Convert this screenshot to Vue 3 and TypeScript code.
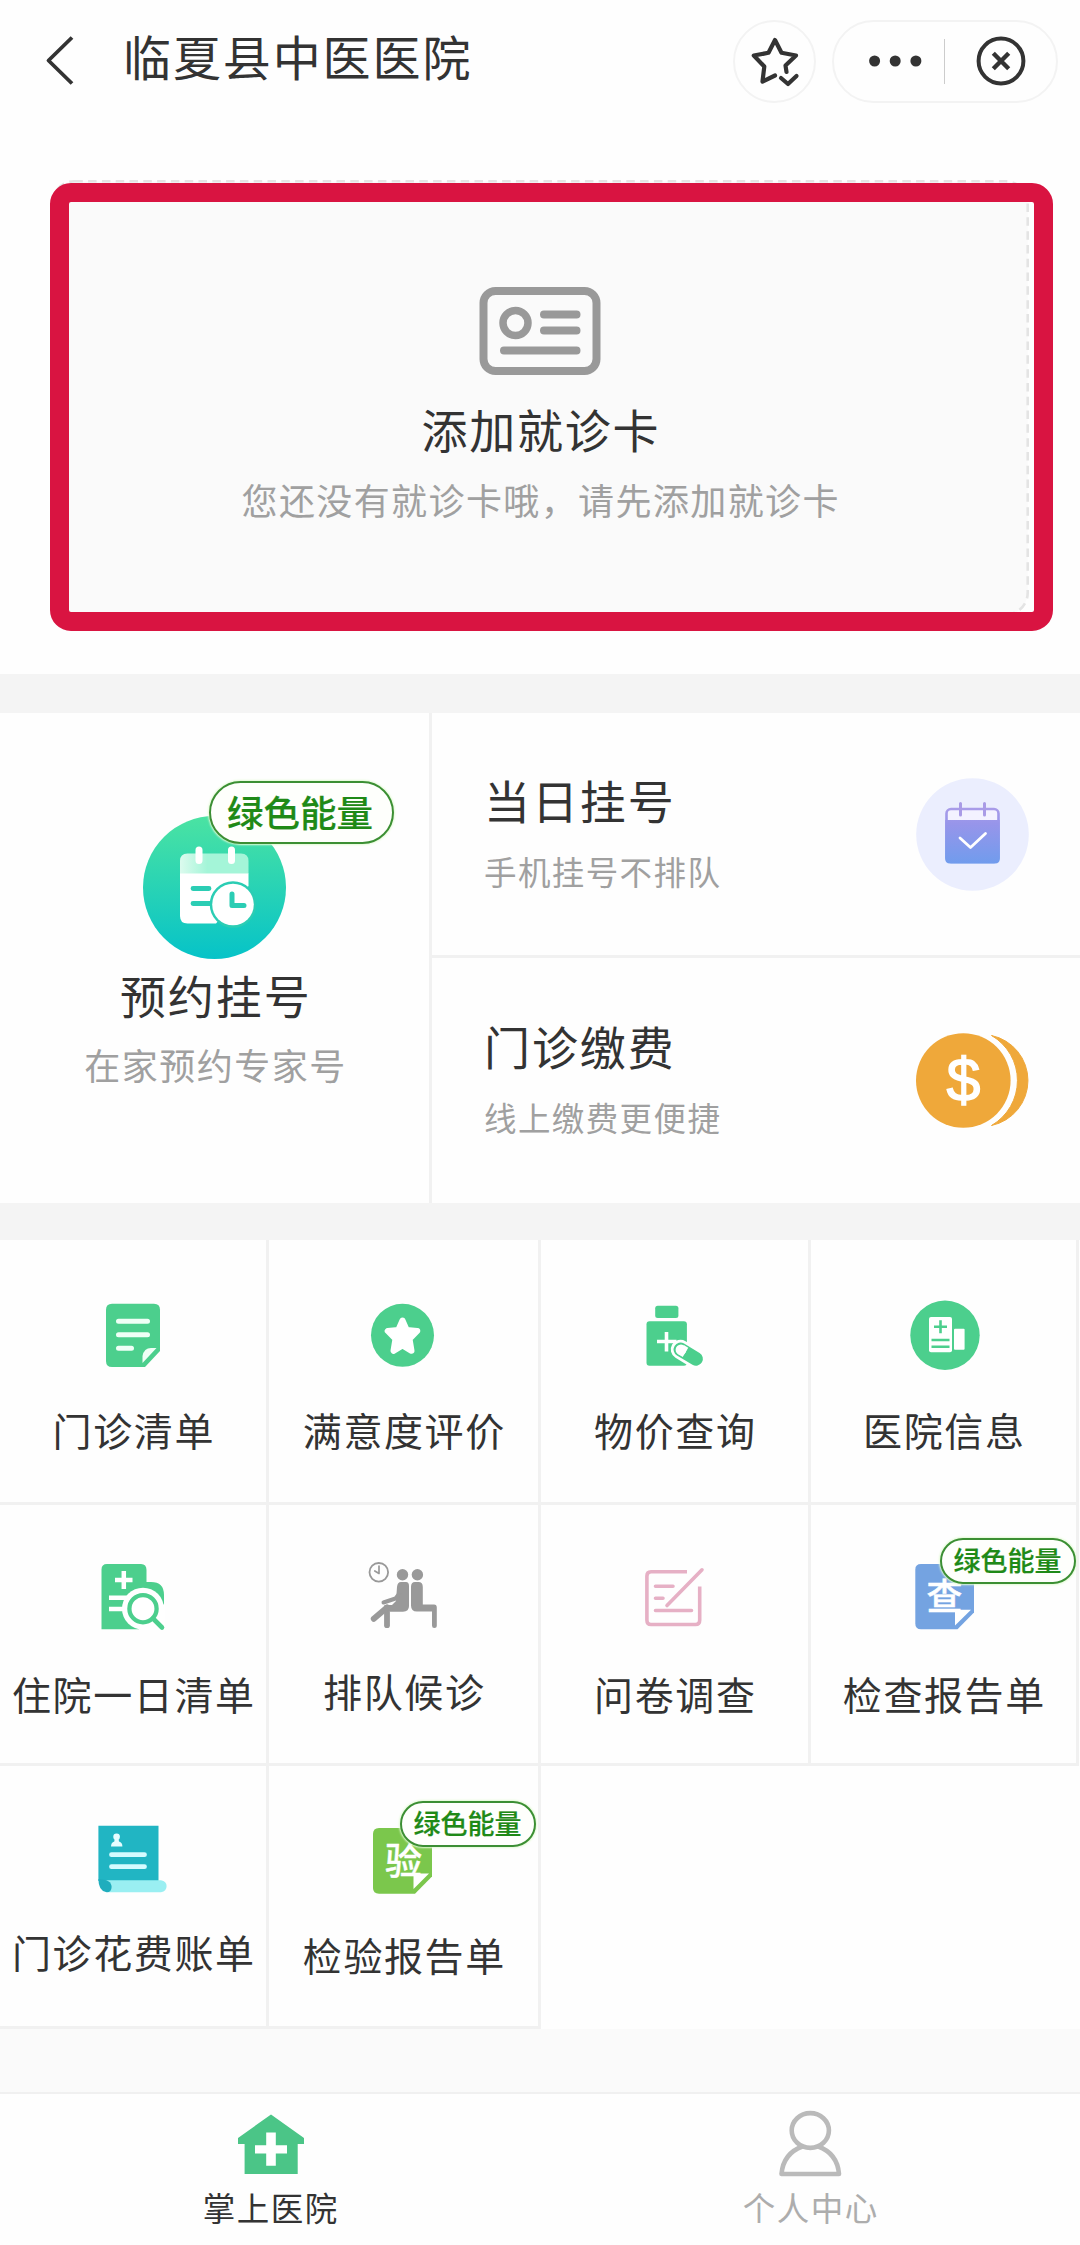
<script setup lang="ts">
type IconName =
  | 'list' | 'rating' | 'price' | 'hospital' | 'daily'
  | 'queue' | 'survey' | 'exam' | 'bill' | 'lab'

interface Service {
  label: string
  icon: IconName
  row: number
  raised?: boolean
  badge?: boolean
}

const services: Service[] = [
  { label: '门诊清单', icon: 'list', row: 1 },
  { label: '满意度评价', icon: 'rating', row: 1 },
  { label: '物价查询', icon: 'price', row: 1 },
  { label: '医院信息', icon: 'hospital', row: 1 },
  { label: '住院一日清单', icon: 'daily', row: 2 },
  { label: '排队候诊', icon: 'queue', row: 2, raised: true },
  { label: '问卷调查', icon: 'survey', row: 2 },
  { label: '检查报告单', icon: 'exam', row: 2, badge: true },
  { label: '门诊花费账单', icon: 'bill', row: 3, raised: true },
  { label: '检验报告单', icon: 'lab', row: 3, badge: true },
]
</script>

<template>
  <div class="page">
    <header class="nav">
      <svg class="back" width="32" height="52" viewBox="0 0 32 52">
        <path d="M28 2.500 L4.500 25.500 L28 48.500" fill="none" stroke="#333" stroke-width="3.800" stroke-linejoin="round" />
      </svg>
      <h1 class="nav-title">临夏县中医医院</h1>
      <div class="round-btn">
        <svg width="54" height="54" viewBox="0 0 54 54" fill="none" stroke="#333" stroke-width="4.200" stroke-linejoin="round" stroke-linecap="round">
          <path d="M27 41.500 L14.500 47.500 L16.300 32.500 L5.800 21.500 L20.500 18.800 L27 6 L33.500 18.800 L48 21.500 L37.500 31.500 L38.500 38" />
          <path d="M33 44 L40 50 L48.500 42" />
        </svg>
      </div>
      <div class="capsule">
        <svg width="54" height="12" viewBox="0 0 54 12" fill="#333">
          <circle cx="5.600" cy="6" r="5.500" /><circle cx="26.200" cy="6" r="5.500" /><circle cx="46.900" cy="6" r="5.500" />
        </svg>
        <i class="capsule-line"></i>
        <svg width="50" height="50" viewBox="0 0 50 50" fill="none" stroke="#333">
          <circle cx="25" cy="25" r="22.400" stroke-width="4" />
          <path d="M17.300 17.300 L32.700 32.700 M32.700 17.300 L17.300 32.700" stroke-width="4.400" />
        </svg>
      </div>
    </header>

    <section class="hero">
      <div class="card">
        <svg class="card-dash" width="978" height="436" viewBox="0 0 978 436">
          <rect x="1.300" y="1.300" width="975.400" height="433.400" rx="22" fill="#fafafa" stroke="#e4e4e4" stroke-width="2.600" stroke-dasharray="8.500 5.300" />
        </svg>
        <svg class="card-icon" width="122" height="88" viewBox="0 0 122 88" fill="none" stroke="#999" stroke-width="8" stroke-linecap="round">
          <rect x="4.500" y="4" width="113" height="80" rx="12" />
          <circle cx="36.500" cy="36" r="12.500" stroke-width="7.500" />
          <path d="M65 27.500 H97.500 M65 43.500 H97.500 M25 63.500 H97.500" />
        </svg>
        <div class="card-title">添加就诊卡</div>
        <div class="card-sub">您还没有就诊卡哦，请先添加就诊卡</div>
        <div class="highlight"></div>
      </div>
    </section>

    <section class="features">
      <div class="feature-main">
        <div class="feature-icon">
          <svg width="143" height="143" viewBox="0 0 143 143">
            <defs>
              <linearGradient id="teal" x1="0" y1="0" x2="0" y2="1">
                <stop offset="0" stop-color="#4be3a2" /><stop offset="1" stop-color="#06c3c8" />
              </linearGradient>
              <linearGradient id="mint" x1="0" y1="0" x2="1" y2="0">
                <stop offset="0" stop-color="#dcfbee" /><stop offset="0.400" stop-color="#a4f5d8" /><stop offset="1" stop-color="#a4f5d8" />
              </linearGradient>
            </defs>
            <circle cx="71.500" cy="71.500" r="71.500" fill="url(#teal)" />
            <path d="M37 58 V45 Q37 37.500 44.500 37.500 H98 Q105.500 37.500 105.500 45 V58 Z" fill="url(#mint)" />
            <path d="M37 57.500 H105.500 V70 L73 107.500 H44.500 Q37 107.500 37 100 Z" fill="#fff" />
            <path d="M56 34 V44.500 M88.500 34 V44.500" stroke="#fff" stroke-width="7" stroke-linecap="round" />
            <path d="M50 72.500 H66 M50 87.500 H68" stroke="#2bcdb4" stroke-width="4.800" stroke-linecap="round" />
            <circle cx="90" cy="88.500" r="22" fill="#2bcdb4" stroke="#2bcdb4" stroke-width="2.500" />
            <circle cx="90" cy="88.500" r="20.800" fill="#fff" />
            <path d="M89 78 V89.500 H101" fill="none" stroke="#2bcdb4" stroke-width="5" stroke-linecap="round" stroke-linejoin="round" />
          </svg>
          <span class="badge badge-lg">绿色能量</span>
        </div>
        <div class="title">预约挂号</div>
        <div class="main-sub">在家预约专家号</div>
      </div>
      <div class="feature-side">
        <div class="feature-row">
          <div class="feature-text">
            <div class="title">当日挂号</div>
            <div class="side-sub">手机挂号不排队</div>
          </div>
          <svg width="113" height="113" viewBox="0 0 113 113">
            <defs>
              <linearGradient id="violet" gradientUnits="userSpaceOnUse" x1="0" y1="24" x2="0" y2="86">
                <stop offset="0" stop-color="#b09fe8" /><stop offset="0.350" stop-color="#9795ea" /><stop offset="1" stop-color="#709ced" />
              </linearGradient>
            </defs>
            <circle cx="56.500" cy="56.500" r="56.300" fill="#ebeefe" />
            <rect x="30.500" y="31" width="52" height="53" rx="4.500" fill="#f3f2ff" stroke="url(#violet)" stroke-width="2.600" />
            <path d="M29.200 42 H83.800 V80.500 Q83.800 85.500 79 85.500 H34 Q29.200 85.500 29.200 80.500 Z" fill="url(#violet)" />
            <path d="M44.500 25.500 V37 M68.500 25.500 V37" stroke="#a99be6" stroke-width="3" stroke-linecap="round" />
            <path d="M44 60 L54.500 69.500 L69.500 55.500" fill="none" stroke="#fff" stroke-width="2.800" stroke-linecap="round" stroke-linejoin="round" />
          </svg>
        </div>
        <div class="feature-row">
          <div class="feature-text">
            <div class="title">门诊缴费</div>
            <div class="side-sub">线上缴费更便捷</div>
          </div>
          <svg width="113" height="97" viewBox="0 0 113 97">
            <circle cx="47.300" cy="48.500" r="47.300" fill="#efa83a" />
            <path d="M75.500 3.500 A46 46 0 0 1 75.500 93.500 A52 52 0 0 0 75.500 3.500 Z" fill="#efa83a" stroke="#efa83a" stroke-width="1" stroke-linejoin="round" />
            <text class="dollar" x="47.500" y="68.500" text-anchor="middle">$</text>
          </svg>
        </div>
      </div>
    </section>

    <section class="grid">
      <div v-for="s in services" :key="s.label" class="cell" :class="['row-' + s.row, { raised: s.raised }]">
        <div class="cell-icon">
          <svg width="96" height="96" viewBox="0 0 96 96">
            <g v-if="s.icon === 'list'">
              <path d="M27 16.700 H69 Q75 16.700 75 22.700 V64 L60 80 H27 Q21 80 21 74 V22.700 Q21 16.700 27 16.700 Z" fill="#4ccf8d" />
              <path d="M33.500 34.300 H62.500 M33.500 47.700 H62.500 M33.500 61.300 H46.500" stroke="#effff6" stroke-width="5" stroke-linecap="round" />
              <path d="M57.500 76 V69 Q59 61 66 61 H71.500 Z" fill="#effff6" />
            </g>
            <g v-else-if="s.icon === 'rating'">
              <circle cx="46.500" cy="48.300" r="31.500" fill="#4ccf8d" />
              <path d="M46.500 33.500 L50.700 43 L61.300 44 L53.500 51.800 L55.500 63.800 L46.500 58.500 L37.500 63.800 L39.500 51.800 L31.700 44 L42.300 43 Z" fill="#fff" stroke="#fff" stroke-width="6" stroke-linejoin="round" />
            </g>
            <g v-else-if="s.icon === 'price'">
              <rect x="28.200" y="18.700" width="23.200" height="12.300" rx="2.500" fill="#4ccf8d" />
              <rect x="19.500" y="34.300" width="40.400" height="44.400" rx="3" fill="#4ccf8d" />
              <path d="M30 54.500 H49.500 M39.500 45 V64.500" stroke="#fff" stroke-width="3.600" />
              <path d="M53.500 62.500 L69 71.800" stroke="#fff" stroke-width="19.500" stroke-linecap="round" />
              <path d="M53.500 62.500 L69 71.800" stroke="#4ccf8d" stroke-width="13.800" stroke-linecap="round" />
              <path d="M54.300 62.900 L58.500 65.400" stroke="#fff" stroke-width="10.800" />
              <circle cx="54" cy="62.800" r="5.400" fill="#fff" />
            </g>
            <g v-else-if="s.icon === 'hospital'">
              <circle cx="49" cy="48.300" r="34.700" fill="#4ccf8d" />
              <rect x="33" y="30" width="23" height="35.300" rx="2" fill="#fff" />
              <rect x="58" y="41.700" width="10.600" height="21" rx="1" fill="#fff" />
              <path d="M38 39.700 H51 M44.500 33.200 V46.200 M35.500 53 H53.500 M35.500 59.700 H53.500" stroke="#4ccf8d" stroke-width="2.600" />
            </g>
            <g v-else-if="s.icon === 'daily'">
              <path d="M22 15 H56 Q61.500 15 61.500 21 V33 H66 Q79 33 79 46 V56 Q70 68 54 80.300 H16.500 V20.500 Q16.500 15 22 15 Z" fill="#4ccf8d" />
              <path d="M30 31 H47.500 M38.800 22 V40 M24 48.700 H46 M24 60 H42" stroke="#fff" stroke-width="4.500" />
              <circle cx="58" cy="59.700" r="21" fill="#fff" />
              <path d="M58 81 L79.500 81 V55 L70 60 Z" fill="#fff" />
              <circle cx="58" cy="59.700" r="13.600" fill="#fff" stroke="#4ccf8d" stroke-width="4.300" />
              <path d="M68 69.500 L77 78.500" stroke="#4ccf8d" stroke-width="4.600" stroke-linecap="round" />
            </g>
            <g v-else-if="s.icon === 'queue'" fill="#999" stroke="#999" stroke-linecap="round" stroke-linejoin="round" stroke-width="0">
              <circle cx="22.800" cy="23.300" r="9.300" fill="none" stroke-width="1.800" />
              <path d="M23 17 V24.500 L18.800 22" fill="none" stroke-width="1.700" />
              <circle cx="46.500" cy="25.700" r="5.700" /><circle cx="61.400" cy="25.700" r="5.700" />
              <path d="M45 33 H50 Q53 33 53 37 V57 Q53 62.700 47 62.700 H34 L28 56 H36 L40 52 L41 38 Q41.500 33 45 33 Z" />
              <path d="M43 45 L39.500 49.500 L27.500 53.500" fill="none" stroke-width="4" />
              <path d="M31 60 V76.200" fill="none" stroke-width="5.800" />
              <path d="M31 58.500 L17.800 69.800" fill="none" stroke-width="6" />
              <path d="M59 33 H62.500 Q66.800 33 66.800 38 V55.500 H78 Q80.800 55.500 80.800 58.500 V76.500 Q80.800 79 78.300 79 Q76 79 76 76.500 V62.500 H61 Q55 62.500 55 56.500 V38 Q55 33 59 33 Z" />
            </g>
            <g v-else-if="s.icon === 'survey'" fill="none" stroke="#e6b0c5" stroke-width="3.600" stroke-linecap="round">
              <path d="M60 22.700 H24 Q19.900 22.700 19.900 27 V71 Q19.900 75.500 24 75.500 H68.500 Q72.700 75.500 72.700 71 V37.500" stroke-linecap="butt" />
              <path d="M75 20.800 L40 56.500 M28.500 37.200 H46 M28.500 49.300 H36 M28.500 61.500 H64.500" />
            </g>
            <g v-else-if="s.icon === 'exam'">
              <path d="M25 15 H78 V63.500 L61.500 80.300 H25 Q19.300 80.300 19.300 74.500 V20.500 Q19.300 15 25 15 Z" fill="#74a3e1" />
              <text class="stamp" x="48.500" y="60.500" text-anchor="middle" font-size="36">查</text>
              <path d="M59 60.700 H75 L59 76.500 Z" fill="#fff" />
            </g>
            <g v-else-if="s.icon === 'bill'">
              <path d="M13.400 13.700 H73.500 V69 H13.400 Z" fill="#21b5c3" />
              <path d="M20 68.300 H76 Q81.600 69.500 81.600 74 Q81.600 79.500 76 80.300 H22 Z" fill="#9aeff2" />
              <path d="M13.400 67 Q26.600 67.500 26.600 75 Q26.600 80.300 21.500 80.300 Q13.400 79 13.400 67 Z" fill="#1fadbd" />
              <circle cx="31.600" cy="24.800" r="3.300" fill="#e6fdff" />
              <path d="M29.800 26 H33.400 L34 29.500 Q37.500 30.500 37.400 34.500 H26 Q26 30.500 29.300 29.500 Z" fill="#e6fdff" />
              <path d="M26.500 42.700 H59.500 M26.500 54.700 H59.500" stroke="#d5fbff" stroke-width="4.800" stroke-linecap="round" />
            </g>
            <g v-else>
              <path d="M23 16 H76 V64.500 L59 81.700 H23 Q17 81.700 17 76 V22 Q17 16 23 16 Z" fill="#7bc74c" />
              <text class="stamp" x="47.500" y="62.500" text-anchor="middle" font-size="37">验</text>
              <path d="M57.500 61.500 H73 L57.500 77 Z" fill="#fff" />
            </g>
          </svg>
          <span v-if="s.badge" class="badge badge-sm">绿色能量</span>
        </div>
        <div class="cell-label">{{ s.label }}</div>
      </div>
    </section>

    <nav class="tabs">
      <div class="tab">
        <svg width="68" height="70" viewBox="-1 0 68 70">
          <path d="M34 5.500 L67 29 V35 H60.700 V65 H7.600 V35 H1 V29 Z" fill="#4bc587" />
          <path d="M29.200 23.500 H38.800 V36.300 H50 V44.500 H38.800 V56.800 H29.200 V44.500 H18 V36.300 H29.200 Z" fill="#fff" />
        </svg>
        <span>掌上医院</span>
      </div>
      <div class="tab muted">
        <svg width="66" height="70" viewBox="0 0 66 70" fill="none" stroke="#bababa" stroke-width="4.600" stroke-linejoin="round">
          <ellipse cx="33.300" cy="21.500" rx="18.600" ry="17.400" />
          <path d="M25.300 37.500 Q6.300 44.500 4.500 65 H62 Q60.300 44.500 41.300 37.500" />
        </svg>
        <span>个人中心</span>
      </div>
    </nav>
  </div>
</template>

<style>
body {
  background: #fefefe;
}
</style>

<style scoped>
.page {
  width: 1080px;
  height: 2245px;
  overflow: hidden;
  display: flex;
  flex-direction: column;
  background: #fafafa;
  color: #333;
  font-family: "Noto Sans CJK SC", sans-serif;
}
.page svg {
  display: block;
  flex: none;
}

.nav {
  height: 122px;
  box-sizing: border-box;
  padding: 0 22px 0 44px;
  display: flex;
  align-items: center;
  background: #fefefe;
}
.nav-title {
  flex: 1;
  margin: -13px 0 0 47px;
  font-size: 48px;
  font-weight: 400;
  letter-spacing: 1.900px;
  line-height: 70px;
}
.round-btn {
  width: 83px;
  height: 83px;
  box-sizing: border-box;
  border: 2px solid #f3f3f3;
  border-radius: 50%;
  display: flex;
  align-items: center;
  justify-content: center;
}
.capsule {
  width: 226px;
  height: 83px;
  box-sizing: border-box;
  margin-left: 16px;
  padding: 0 30px 0 35px;
  border: 2px solid #f3f3f3;
  border-radius: 42px;
  display: flex;
  align-items: center;
}
.capsule-line {
  width: 1px;
  height: 45px;
  margin: 0 31px 0 21px;
  background: #ccc;
}
.capsule svg:last-child {
  margin-top: -1px;
}

.hero {
  height: 552px;
  box-sizing: border-box;
  padding: 58px 51px 0;
  background: #fefefe;
}
.card {
  position: relative;
  height: 436px;
  box-sizing: border-box;
  padding-top: 107px;
  display: flex;
  flex-direction: column;
  align-items: center;
}
.card-dash {
  position: absolute;
  left: 0;
  top: 0;
}
.card-icon,
.card-title,
.card-sub {
  position: relative;
}
.card-title {
  margin-top: 23px;
  font-size: 46px;
  letter-spacing: 1.800px;
  text-indent: 1.800px;
  line-height: 60px;
}
.card-sub {
  margin-top: 16px;
  font-size: 36px;
  letter-spacing: 1.400px;
  text-indent: 1.400px;
  line-height: 50px;
  color: #a0a0a0;
}
.highlight {
  position: absolute;
  left: -1px;
  top: 3px;
  width: 1003px;
  height: 448px;
  box-sizing: border-box;
  border: 19px solid #d91441;
  border-radius: 21px;
}

.features {
  height: 490px;
  display: flex;
  border-top: 39px solid #f4f4f4;
  border-bottom: 37px solid #f4f4f4;
  background: #fefefe;
}
.feature-main {
  width: 429px;
  border-right: 3px solid #f1f1f1;
  padding-top: 103px;
  display: flex;
  flex-direction: column;
  align-items: center;
}
.feature-icon {
  position: relative;
}
.badge {
  position: absolute;
  box-sizing: border-box;
  display: flex;
  align-items: center;
  justify-content: center;
  border: 2px solid #3c8f34;
  background: #fefffc;
  box-shadow: 0 0 2px 1px #e3fbd5;
  color: #1f8a17;
  font-weight: 500;
  white-space: nowrap;
  -webkit-text-stroke: 0.2px #1f8a17;
}
.badge-lg {
  left: 66px;
  top: -35px;
  width: 185px;
  height: 63px;
  padding-right: 3px;
  padding-bottom: 3px;
  border-radius: 32px;
  font-size: 36.500px;
}
.badge-sm {
  left: 44px;
  top: -11px;
  width: 136px;
  height: 46px;
  padding-bottom: 3px;
  border-radius: 23px;
  font-size: 27px;
}
.title {
  font-size: 46px;
  letter-spacing: 1.900px;
  line-height: 60px;
}
.feature-main .title {
  margin-top: 5px;
  text-indent: 2.500px;
}
.main-sub {
  margin-top: 15px;
  font-size: 36px;
  letter-spacing: 1.500px;
  text-indent: 2px;
  line-height: 50px;
  color: #a0a0a0;
}
.feature-side {
  flex: 1;
  display: flex;
  flex-direction: column;
}
.feature-row {
  flex: 1;
  padding: 0 51px 0 52px;
  display: flex;
  align-items: center;
  justify-content: space-between;
}
.feature-row:first-child {
  flex: 0 0 242px;
  border-bottom: 3px solid #f1f1f1;
}
.feature-text {
  padding-bottom: 7px;
}
.side-sub {
  margin-top: 20px;
  font-size: 32.500px;
  letter-spacing: 1.400px;
  line-height: 44px;
  color: #a0a0a0;
}
.dollar {
  font-family: "Liberation Sans", sans-serif;
  font-size: 61px;
  fill: #fff;
  stroke: #fff;
  stroke-width: 1.4px;
}

.grid {
  display: grid;
  grid-template-columns: 269px 272px 270px 268px;
  grid-template-rows: 265px 261px 263px;
  padding-right: 1px;
  background: #fefefe;
}
.cell {
  display: flex;
  flex-direction: column;
  align-items: center;
  border-right: 3px solid #f1f1f1;
  border-bottom: 3px solid #f1f1f1;
}
.row-1 { padding-top: 47px; }
.row-2 { padding-top: 44px; }
.row-3 { padding-top: 46px; }
.cell-icon {
  position: relative;
}
.cell-label {
  margin-top: 21px;
  font-size: 39px;
  letter-spacing: 1.600px;
  text-indent: 1.600px;
  line-height: 50px;
  white-space: nowrap;
}
.row-2 .cell-label { margin-top: 23px; }
.row-2.raised .cell-label { margin-top: 20px; }
.row-3.raised .cell-label { margin-top: 18px; }
.stamp {
  font-weight: 500;
  fill: #fff;
  stroke: #fff;
  stroke-width: 0.4px;
}

.tabs {
  height: 153px;
  box-sizing: border-box;
  margin-top: auto;
  padding-top: 15px;
  border-top: 2px solid #f0f0f0;
  display: flex;
  background: #fefefe;
}
.tab {
  flex: 1;
  display: flex;
  flex-direction: column;
  align-items: center;
}
.tab span {
  margin-top: 7px;
  font-size: 32.500px;
  letter-spacing: 1.500px;
  text-indent: 1.500px;
  line-height: 42px;
}
.muted span {
  color: #adadad;
}
</style>
